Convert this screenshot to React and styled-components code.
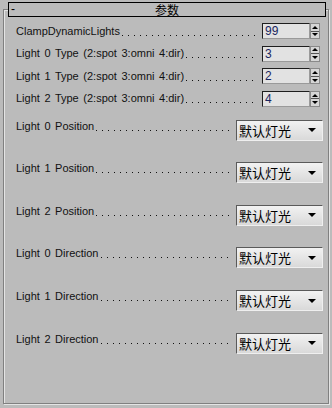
import styled, { createGlobalStyle } from "styled-components";

const GlobalStyle = createGlobalStyle`
  html, body {
    margin: 0;
    padding: 0;
    background: #bbbbbb;
  }
  body {
    font-family: "Liberation Sans", Arial, sans-serif;
  }
`;

const spinners = [
  { label: "ClampDynamicLights", value: "99" },
  { label: "Light 0 Type (2:spot 3:omni 4:dir)", value: "3" },
  { label: "Light 1 Type (2:spot 3:omni 4:dir)", value: "2" },
  { label: "Light 2 Type (2:spot 3:omni 4:dir)", value: "4" },
];

const drops = [
  "Light 0 Position",
  "Light 1 Position",
  "Light 2 Position",
  "Light 0 Direction",
  "Light 1 Direction",
  "Light 2 Direction",
];

const App = () => {
  return (
    <Page>
      <GlobalStyle />
      <Header>
        <Toggle>-</Toggle>
        <Title>参数</Title>
      </Header>
      <Frame>
        {spinners.map((s) => (
          <SpinRow key={s.label}>
            <Label>{s.label}</Label>
            <Leader />
            <Spinner>
              <SpinInput>{s.value}</SpinInput>
              <SpinButtons>
                <SpinHalf>
                  <Arrow $up />
                </SpinHalf>
                <SpinHalf $bottom>
                  <Arrow />
                </SpinHalf>
              </SpinButtons>
            </Spinner>
          </SpinRow>
        ))}
        <DropList>
          {drops.map((d) => (
            <DropRow key={d}>
              <Label>{d}</Label>
              <Leader />
              <Select>
                <SelectText>默认灯光</SelectText>
                <Arrow $big />
              </Select>
            </DropRow>
          ))}
        </DropList>
      </Frame>
    </Page>
  );
};

const Page = styled.div`
  width: 332px;
  height: 408px;
  box-sizing: border-box;
  padding: 2px 3px 4px 3px;
  display: flex;
  flex-direction: column;
  background: #bbbbbb;
`;

const Header = styled.div`
  position: relative;
  z-index: 1;
  margin: 0 3px 0 5px;
  height: 15px;
  box-sizing: border-box;
  border: 1px solid #000;
  background: #bcbcbc;
  display: grid;
  grid-template-columns: 1fr auto 1fr;
  align-items: center;
`;

const Toggle = styled.span`
  padding-left: 2px;
  font-size: 12px;
  line-height: 13px;
  color: #000;
`;

const Title = styled.span`
  font-family: "Noto Sans CJK SC", sans-serif;
  font-size: 12px;
  line-height: 13px;
  color: #000;
`;

const Frame = styled.div`
  flex: 1;
  margin-top: -8px;
  box-sizing: border-box;
  border: 1px solid #808080;
  box-shadow: inset 1px 1px 0 #e4e4e4, 1px 1px 0 #e4e4e4;
  padding: 13px 5px 0 12px;
  display: flex;
  flex-direction: column;
  gap: 6.67px;
`;

const SpinRow = styled.div`
  display: flex;
  align-items: center;
  height: 16px;
  padding-right: 3px;
`;

const Label = styled.span`
  white-space: nowrap;
  font-size: 11px;
  line-height: 13px;
  word-spacing: 1.5px;
  color: #111;
`;

const Leader = styled.span`
  flex: 1;
  align-self: flex-start;
  height: 13px;
  margin-left: 2px;
  background-image: linear-gradient(to right, #111 1px, transparent 1px);
  background-size: 6px 1px;
  background-repeat: repeat-x;
  background-position: 0 10px;
  ${SpinRow} & {
    align-self: center;
  }
`;

const Spinner = styled.div`
  display: flex;
  margin-left: 4px;
  height: 16px;
`;

const SpinInput = styled.div`
  width: 48px;
  box-sizing: border-box;
  border-top: 1px solid #1e1e1e;
  border-left: 1px solid #1e1e1e;
  border-right: 1px solid #9a9a9a;
  border-bottom: 1px solid #9a9a9a;
  background: #e2e2e2;
  font-size: 12px;
  line-height: 14px;
  padding-left: 2px;
  color: #1a2660;
`;

const SpinButtons = styled.div`
  width: 8px;
  display: flex;
  flex-direction: column;
  border: 1px solid #8a8a8a;
  background: #d6d6d6;
`;

const SpinHalf = styled.div`
  flex: 1;
  display: flex;
  align-items: center;
  justify-content: center;
  border-top: ${(p) => (p.$bottom ? "1px solid #555" : "none")};
`;

const Arrow = styled.span`
  width: 0;
  height: 0;
  border-left: ${(p) => (p.$big ? 4 : 3)}px solid transparent;
  border-right: ${(p) => (p.$big ? 4 : 3)}px solid transparent;
  ${(p) =>
    p.$up
      ? "border-bottom: 3px solid #000;"
      : `border-top: ${p.$big ? 4 : 3}px solid #000;`}
`;

const DropList = styled.div`
  margin-top: 6px;
  display: flex;
  flex-direction: column;
  gap: 21.6px;
`;

const DropRow = styled.div`
  display: flex;
  align-items: flex-start;
  height: 21px;
`;

const Select = styled.div`
  width: 87px;
  height: 21px;
  margin-left: 5px;
  box-sizing: border-box;
  border-top: 1px solid #5a5a5a;
  border-left: 1px solid #5a5a5a;
  border-right: 1px solid #efefef;
  border-bottom: 1px solid #efefef;
  background: linear-gradient(#f2f2f2, #d9d9d9);
  display: flex;
  align-items: center;
  justify-content: space-between;
  padding: 0 6px 0 2px;
`;

const SelectText = styled.span`
  font-family: "Noto Sans CJK SC", sans-serif;
  font-size: 13px;
  line-height: 15px;
  color: #000;
`;

export default App;
